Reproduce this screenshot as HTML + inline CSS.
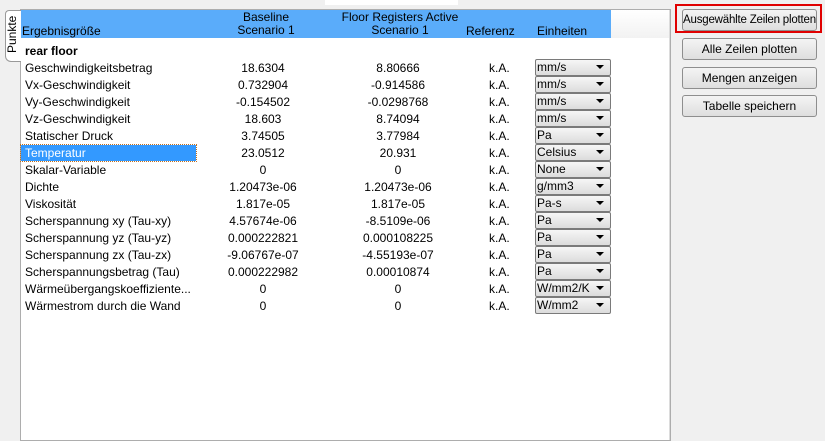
<!DOCTYPE html><html><head><style>
body{margin:0;width:825px;height:433px;background:#f0f0f0;font-family:"Liberation Sans",sans-serif;font-size:12px;color:#000;position:relative;overflow:hidden}
.a{position:absolute;white-space:nowrap}
.panel{position:absolute;left:20px;top:9px;width:649px;height:430px;background:#fff;border:1px solid #adadad;box-shadow:inset -1px 0 0 #dcdcdc}
.hd{position:absolute;left:21px;top:10px;width:590px;height:28px;background:#5aacfa}
.hd2{position:absolute;left:611px;top:10px;width:58px;height:28px;background:linear-gradient(#fff,#f2f2f2)}
.c{text-align:center;transform:translateX(-50%)}
.dd{position:absolute;left:535px;width:73px;height:15px;border:1px solid #7a7a7a;border-radius:2px;background:linear-gradient(#f6f6f6,#dcdcdc);font-size:12px;line-height:15px;padding-left:1px;box-sizing:content-box}
.dd:after{content:"";position:absolute;right:6px;top:5px;border-left:4px solid transparent;border-right:4px solid transparent;border-top:4px solid #000}
.btn{position:absolute;left:682px;width:133px;height:20px;border:1px solid #8e8e8e;border-radius:3px;background:linear-gradient(#f4f4f4,#dedede);text-align:center;line-height:20px;font-size:12px;white-space:nowrap;overflow:hidden}
</style></head><body>
<div class="a" style="left:325px;top:0;width:133px;height:5px;background:#fff"></div>
<div class="panel"></div>
<div class="hd"></div><div class="hd2"></div>
<div class="a" style="left:5px;top:10px;width:15px;height:50px;background:#fff;border:1px solid #999;border-right:none;border-radius:4px 0 0 6px"></div>
<div class="a" style="transform:rotate(-90deg);transform-origin:0 0;width:40px;font-size:12px;line-height:14px;left:5px;top:53px">Punkte</div>
<div class="a" style="left:22px;top:24px">Ergebnisgröße</div>
<div class="a c" style="left:266px;top:11px;line-height:13px">Baseline<br>Scenario 1</div>
<div class="a c" style="left:400px;top:11px;line-height:13px">Floor Registers Active<br>Scenario 1</div>
<div class="a" style="left:466px;top:24px">Referenz</div>
<div class="a" style="left:537px;top:24px">Einheiten</div>
<div class="a" style="left:25px;top:44px;font-weight:bold">rear floor</div>
<div class="a" style="left:21px;top:145px;width:175px;height:16px;background:#3399ff;outline:1px dotted #c07020"></div>
<div id="rows"></div>
<script>
var R=[["Geschwindigkeitsbetrag","18.6304","8.80666","mm/s"],["Vx-Geschwindigkeit","0.732904","-0.914586","mm/s"],["Vy-Geschwindigkeit","-0.154502","-0.0298768","mm/s"],["Vz-Geschwindigkeit","18.603","8.74094","mm/s"],["Statischer Druck","3.74505","3.77984","Pa"],["Temperatur","23.0512","20.931","Celsius"],["Skalar-Variable","0","0","None"],["Dichte","1.20473e-06","1.20473e-06","g/mm3"],["Viskosität","1.817e-05","1.817e-05","Pa-s"],["Scherspannung xy (Tau-xy)","4.57674e-06","-8.5109e-06","Pa"],["Scherspannung yz (Tau-yz)","0.000222821","0.000108225","Pa"],["Scherspannung zx (Tau-zx)","-9.06767e-07","-4.55193e-07","Pa"],["Scherspannungsbetrag (Tau)","0.000222982","0.00010874","Pa"],["Wärmeübergangskoeffiziente...","0","0","W/mm2/K"],["Wärmestrom durch die Wand","0","0","W/mm2"]];
var h="";R.forEach(function(r,i){var y=61+17*i;
h+='<div class="a" style="left:25px;top:'+y+'px;'+(i==5?'color:#fff':'')+'">'+r[0]+'</div>';
h+='<div class="a c" style="left:263px;top:'+y+'px">'+r[1]+'</div>';
h+='<div class="a c" style="left:398px;top:'+y+'px">'+r[2]+'</div>';
h+='<div class="a" style="left:489px;top:'+y+'px">k.A.</div>';
h+='<div class="dd" style="top:'+(y-2)+'px">'+r[3]+'</div>';});
document.getElementById("rows").innerHTML=h;
</script>
<div class="a" style="left:675px;top:4px;width:143px;height:25px;border:2px solid #e00000"></div>
<div class="btn" style="top:9px;font-size:11.5px;letter-spacing:-0.2px">Ausgewählte Zeilen plotten</div>
<div class="btn" style="top:38px">Alle Zeilen plotten</div>
<div class="btn" style="top:67px">Mengen anzeigen</div>
<div class="btn" style="top:95px">Tabelle speichern</div>
</body></html>
